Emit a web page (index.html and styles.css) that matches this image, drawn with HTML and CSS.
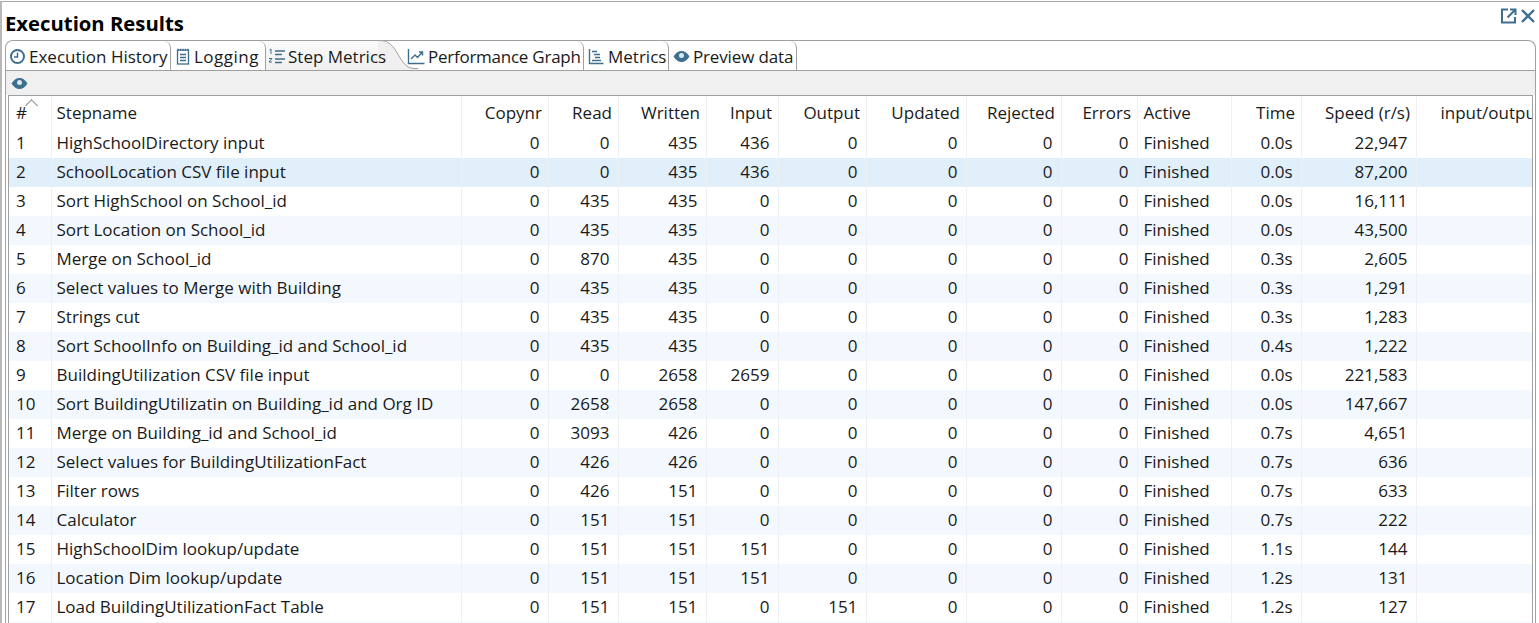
FILE: index.html
```html
<!DOCTYPE html>
<html lang="en">

<head>
    <meta charset="UTF-8">
    <title>Execution Results</title>
    <link rel="stylesheet" href="styles.css">
</head>

<body>
    <div class="frame">
        <div class="title-bar">
            <h1>Execution Results</h1>
            <div class="title-icons">
                <svg width="18" height="18" viewBox="0 0 18 18" fill="none" stroke="#3f6f8f" stroke-width="2">
                    <path d="M8 2.5H2V15.5H15V10" />
                    <path d="M7.5 10.5L15 3M10 2.5H15.5V8" />
                </svg>
                <svg width="16" height="16" viewBox="0 0 16 16" fill="none" stroke="#3f6f8f" stroke-width="2.4">
                    <path d="M2 2L14 14M14 2L2 14" />
                </svg>
            </div>
        </div>

        <div class="panel">
            <div class="tabs">
                <div class="tab tab-history">
                    <svg width="17" height="17" viewBox="0 0 17 17" fill="none" stroke="#3f6f8f">
                        <circle cx="8.5" cy="8.5" r="6.5" stroke-width="2" />
                        <path d="M8.5 4.5V9H5" stroke-width="1.5" />
                    </svg>
                    Execution History
                </div>
                <div class="tab tab-logging">
                    <svg width="14" height="17" viewBox="0 0 14 17" fill="none" stroke="#3f6f8f" stroke-width="1.3">
                        <rect x="1.5" y="2" width="11" height="14" />
                        <path d="M2 .8V3M4.5 .8V3M7 .8V3M9.5 .8V3M12 .8V3M4 6.5H10M4 9.5H10M4 12.5H10" />
                    </svg>
                    Logging
                </div>
                <div class="tab tab-active">
                    <svg width="18" height="17" viewBox="0 0 18 17" fill="none" stroke="#3f6f8f" stroke-width="1.3">
                        <path d="M7 3H17M7 6.5H14M7 11H17M7 14.5H14" />
                        <path d="M1.5 2L3 1V6M1 10.5H4L1 14H4" stroke-width="1" />
                    </svg>
                    Step Metrics
                    <svg class="tab-curve" width="40" height="30" viewBox="0 0 40 30">
                        <path d="M0 .5H2C10 .5 14 5 18 11C23 19 27 28.5 36 28.5H40V30H0Z" fill="#f0f0f0" />
                        <path d="M0 .5H2C10 .5 14 5 18 11C23 19 27 28.5 36 28.5H40" fill="none" stroke="#a0a0a0" />
                    </svg>
                </div>
                <div class="tab tab-graph">
                    <svg width="18" height="17" viewBox="0 0 18 17" fill="none" stroke="#3f6f8f" stroke-width="1.4">
                        <path d="M1.5 1V15.5H17.5" />
                        <path d="M4 11L8 7L10.5 9.5L15 4.5M12 4H15.5V7.5" />
                    </svg>
                    Performance Graph
                </div>
                <div class="tab tab-metrics">
                    <svg width="16" height="17" viewBox="0 0 16 17" fill="none" stroke="#3f6f8f" stroke-width="1.4">
                        <path d="M1.5 1V15.5H15.5" />
                        <path d="M4 3.5H9M6 6.5H12M7 9.5H12M4 12.5H13" stroke-width="1.6" />
                    </svg>
                    Metrics
                </div>
                <div class="tab tab-preview">
                    <svg width="17" height="17" viewBox="0 0 17 17">
                        <path d="M.5 8.5C3 4.5 5.5 3 8.5 3S14 4.5 16.5 8.5C14 12.5 11.5 14 8.5 14S3 12.5 .5 8.5Z" fill="#3f6f8f" />
                        <circle cx="8.5" cy="7.5" r="2.5" fill="#dce8f0" />
                    </svg>
                    Preview data
                </div>
            </div>

            <div class="toolbar">
                <svg width="17" height="17" viewBox="0 0 17 17">
                    <path d="M.5 8.5C3 4.5 5.5 3 8.5 3S14 4.5 16.5 8.5C14 12.5 11.5 14 8.5 14S3 12.5 .5 8.5Z" fill="#3f6f8f" />
                    <circle cx="8.5" cy="7.5" r="2.5" fill="#dce8f0" />
                </svg>
            </div>

            <div class="grid-box">
                <table class="grid">
                    <colgroup>
                        <col class="c-num">
                        <col class="c-name">
                        <col class="c-copy">
                        <col class="c-read">
                        <col class="c-written">
                        <col class="c-input">
                        <col class="c-output">
                        <col class="c-updated">
                        <col class="c-rejected">
                        <col class="c-errors">
                        <col class="c-active">
                        <col class="c-time">
                        <col class="c-speed">
                        <col class="c-io">
                    </colgroup>
                    <thead>
                        <tr>
                            <th class="left sort-col">#<span class="sort-mark"></span></th>
                            <th class="left name">Stepname</th>
                            <th>Copynr</th>
                            <th>Read</th>
                            <th>Written</th>
                            <th>Input</th>
                            <th>Output</th>
                            <th>Updated</th>
                            <th>Rejected</th>
                            <th>Errors</th>
                            <th class="left status">Active</th>
                            <th>Time</th>
                            <th>Speed (r/s)</th>
                            <th class="io">input/output</th>
                        </tr>
                    </thead>
                    <tbody id="rows"></tbody>
                </table>
            </div>
        </div>
    </div>

    <script src="rows.js"></script>
</body>

</html>
```

FILE: rows.js
```js
var data = [
    ['HighSchoolDirectory input', 0, 435, 436, 0, '0.0s', '22,947'],
    ['SchoolLocation CSV file input', 0, 435, 436, 0, '0.0s', '87,200'],
    ['Sort HighSchool on School_id', 435, 435, 0, 0, '0.0s', '16,111'],
    ['Sort Location on School_id', 435, 435, 0, 0, '0.0s', '43,500'],
    ['Merge on School_id', 870, 435, 0, 0, '0.3s', '2,605'],
    ['Select values to Merge with Building', 435, 435, 0, 0, '0.3s', '1,291'],
    ['Strings cut', 435, 435, 0, 0, '0.3s', '1,283'],
    ['Sort SchoolInfo on Building_id and School_id', 435, 435, 0, 0, '0.4s', '1,222'],
    ['BuildingUtilization CSV file input', 0, 2658, 2659, 0, '0.0s', '221,583'],
    ['Sort BuildingUtilizatin on Building_id and Org ID', 2658, 2658, 0, 0, '0.0s', '147,667'],
    ['Merge on Building_id and School_id', 3093, 426, 0, 0, '0.7s', '4,651'],
    ['Select values for BuildingUtilizationFact', 426, 426, 0, 0, '0.7s', '636'],
    ['Filter rows', 426, 151, 0, 0, '0.7s', '633'],
    ['Calculator', 151, 151, 0, 0, '0.7s', '222'],
    ['HighSchoolDim lookup/update', 151, 151, 151, 0, '1.1s', '144'],
    ['Location Dim lookup/update', 151, 151, 151, 0, '1.2s', '131'],
    ['Load BuildingUtilizationFact Table', 151, 151, 0, 151, '1.2s', '127'],
    ['', '', '', '', '', '', '']
]

var tbody = document.getElementById('rows')

data.forEach(function (row, index) {
    var tr = document.createElement('tr')
    if (index == 1) {
        tr.className = 'selected'
    } else if (index % 2 == 1) {
        tr.className = 'odd'
    }
    var last = row[0] == ''
    var cells = [
        [last ? '' : index + 1, 'left'],
        [row[0], 'left name'],
        [last ? '' : 0, ''],
        [row[1], ''],
        [row[2], ''],
        [row[3], ''],
        [row[4], ''],
        [last ? '' : 0, ''],
        [last ? '' : 0, ''],
        [last ? '' : 0, ''],
        [last ? '' : 'Finished', 'left status'],
        [row[5], ''],
        [row[6], ''],
        ['', '']
    ]
    cells.forEach(function (cell) {
        var td = document.createElement('td')
        td.textContent = cell[0]
        td.className = cell[1]
        tr.appendChild(td)
    })
    tbody.appendChild(tr)
})
```

FILE: styles.css
```css
html, body {
    margin: 0;
    height: 623px;
    overflow: hidden;
    background-color: #fff;
    color: #1a1a1a;
    font-family: "Open Sans", "Noto Sans", sans-serif;
    font-size: 17px;
}

svg {
    flex: none;
}

.frame {
    height: 622px;
    margin-top: 1px;
    border-top: 1px solid #a8a8a8;
    border-left: 2px solid #b8b8b8;
    padding-left: 3px;
    box-sizing: border-box;
}

.title-bar {
    display: flex;
    justify-content: space-between;
    height: 38px;
    padding-right: 3px;
}

h1 {
    margin: 7px 0 0 0;
    font-size: 20.3px;
    line-height: 28px;
    font-weight: 700;
    color: #000;
}

.title-icons {
    display: flex;
    gap: 2px;
    padding-top: 5px;
    height: 18px;
    align-items: center;
}

.panel {
    margin-right: 3px;
    height: 583px;
    border: 1px solid #a0a0a0;
    border-bottom: 0;
    border-radius: 8px 8px 0 0;
    box-sizing: border-box;
}

.tabs {
    display: flex;
    height: 29px;
    border-bottom: 1px solid #a0a0a0;
}

.tab {
    display: flex;
    align-items: center;
    gap: 3px;
    height: 29px;
    box-sizing: border-box;
    padding: 2px 0 0 3px;
    border-right: 1px solid #a0a0a0;
    border-radius: 0 7px 0 0;
    white-space: nowrap;
    background-color: #fff;
    flex: none;
}

.tab-history { width: 165px; border-radius: 8px 7px 0 0; }
.tab-logging { width: 95px; padding-left: 5px; gap: 4px; letter-spacing: .5px; }
.tab-active {
    width: 112px;
    height: 30px;
    padding-left: 2px;
    gap: 2px;
    border-right: 0;
    border-top: 1px solid #a0a0a0;
    margin-top: -1px;
    position: relative;
    border-radius: 0;
    background-image: linear-gradient(#fafafa, #f0f0f0);
    z-index: 1;
}
.tab-graph {
    width: 206px;
    padding-left: 29px;
    gap: 3px;
    letter-spacing: -.25px;
    position: relative;
    background-color: transparent;
    z-index: 2;
}
.tab-metrics { width: 85px; padding-left: 4px; gap: 4px; }
.tab-preview { width: 128px; padding-left: 4px; gap: 3px; letter-spacing: -.15px; }

.tab-curve {
    position: absolute;
    left: 112px;
    top: -1px;
    z-index: -1;
}

.toolbar {
    height: 24px;
    background-color: #f0f0f0;
    padding-left: 5px;
    display: flex;
    align-items: center;
}

.grid-box {
    margin: 0 2px;
    height: 528px;
    overflow: hidden;
    border-top: 1px solid #a0a0a0;
    border-left: 1px solid #a0a0a0;
    border-right: 1px solid #a0a0a0;
}

.grid {
    border-collapse: collapse;
    table-layout: fixed;
    width: 1523px;
}

.c-num { width: 42px; }
.c-name { width: 410px; }
.c-copy { width: 87px; }
.c-read { width: 70px; }
.c-written { width: 88px; }
.c-input { width: 72px; }
.c-output { width: 88px; }
.c-updated { width: 100px; }
.c-rejected { width: 95px; }
.c-errors { width: 76px; }
.c-active { width: 94px; }
.c-time { width: 70px; }
.c-speed { width: 115px; }
.c-io { width: 116px; }

th, td {
    box-sizing: border-box;
    padding: 0 5.5px 0 6px;
    text-align: right;
    border-right: 1px solid #eef0f2;
    white-space: nowrap;
    overflow: hidden;
    font-weight: 400;
}

th {
    height: 33px;
}

td {
    height: 29px;
    padding: 0 8px 2px 7px;
}

.left { text-align: left; }
th.left { padding-left: 7px; }
.name, th.name { padding-left: 5px; }
.status, th.status { padding-left: 6px; }
th.io { text-align: left; padding-left: 24px; border-right: 0; }

.sort-col { position: relative; }

.sort-mark {
    position: absolute;
    left: 18px;
    top: 5px;
    width: 8px;
    height: 8px;
    border-top: 1px solid #888;
    border-left: 1px solid #888;
    transform: rotate(45deg);
}

.odd { background-color: #f2f8fd; }
.selected { background-color: #e1effb; }
```
